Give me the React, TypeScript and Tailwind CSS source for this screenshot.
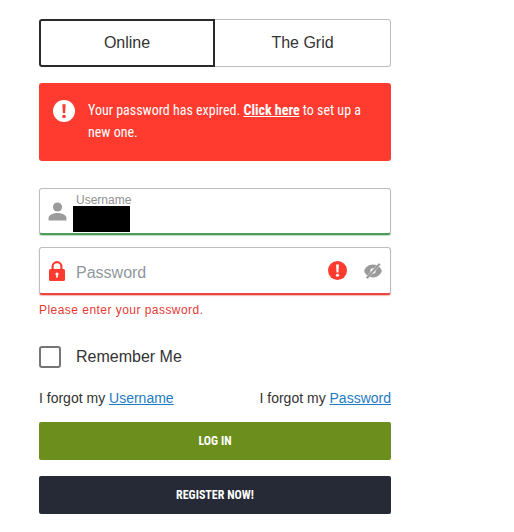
import React from 'react';

const condensed = "font-['Roboto_Condensed','Liberation_Sans_Narrow',Roboto,sans-serif] [font-stretch:75%]";

const AlertIcon: React.FC<{ className?: string; color: string; mark: string }> = ({ className, color, mark }) => (
  <svg viewBox="0 0 24 24" className={className}>
    <circle cx="12" cy="12" r="12" fill={color} />
    <path d="M10.200 4.500h3.600l-.6 10h-2.400z" fill={mark} />
    <circle cx="12" cy="18" r="2" fill={mark} />
  </svg>
);

const UserIcon = () => (
  <svg viewBox="0 0 20 20" className="w-[19px] h-[19px]" fill="#9b9b9b">
    <circle cx="10" cy="5.2" r="4.8" />
    <path d="M0.6 19.5v-2.600c0-3.600 5.600-5.300 9.400-5.300s9.400 1.700 9.400 5.300v2.600z" />
  </svg>
);

const LockIcon = () => (
  <svg viewBox="0 0 16 20" className="w-[16px] h-[20px]">
    <path d="M3.600 9V5.600a4.400 4.400 0 0 1 8.800 0V9" fill="none" stroke="#ff3b30" strokeWidth="2.200" />
    <rect x="0" y="8" width="16" height="12" rx="1.500" fill="#ff3b30" />
    <circle cx="8" cy="13" r="1.600" fill="#fff" />
    <rect x="7.200" y="13" width="1.600" height="3.600" fill="#fff" />
  </svg>
);

const EyeOffIcon = () => (
  <svg viewBox="0 0 20 18" className="w-[18px] h-[16px]" fill="#9a9a9a">
    <path fillRule="evenodd" d="M10 1.800c5 0 8.700 3.300 10 7.200-1.300 3.900-5 7.200-10 7.200S1.300 12.900 0 9c1.300-3.900 5-7.200 10-7.200zM10 6a3 3 0 1 0 0 6 3 3 0 0 0 0-6z" />
    <path d="M16.500 0l2.300 1.700L4 18l-2.300-1.700z" stroke="#fff" strokeWidth="0.4" />
  </svg>
);

export default function App() {
  return (
    <div className="w-[514px] h-[532px] bg-white font-['Liberation_Sans',Arial,sans-serif] text-[#333]">
      <div className="w-[352px] ml-[39px] pt-[19px] flex flex-col">
        <div className="flex h-[48px] text-[16px]">
          <button className="w-[176px] rounded-l-[3px] border-2 border-[#2a2a2a] flex items-center justify-center">
            Online
          </button>
          <button className="flex-1 rounded-r-[3px] border border-l-0 border-[#bdbdbd] flex items-center justify-center">
            The Grid
          </button>
        </div>

        <div className="mt-[16px] h-[78px] rounded-[3px] bg-[#ff3b30] text-white flex pl-[14px] pr-[20px] pt-[16px]">
          <AlertIcon className="w-[22px] h-[22px] shrink-0 mt-[1px]" color="#fff" mark="#ff3b30" />
          <p className={`ml-[13px] text-[14px] leading-[22px] ${condensed}`}>
            Your password has expired. <a className="font-bold underline">Click here</a> to set up a new one.
          </p>
        </div>

        <div className="mt-[27px] h-[47px] rounded-[3px] border border-[#bdbdbd] border-b-2 border-b-[#4f9d5b] shadow-[0_1px_1px_rgba(79,157,91,0.4)] flex">
          <div className="w-[33px] flex items-center justify-center pl-[1px] pt-[1px]">
            <UserIcon />
          </div>
          <div className="flex flex-col">
            <span className="pl-[3px] text-[12px] leading-[12px] pt-[5px] text-[#8f8f8f]">Username</span>
            <div className="w-[57px] h-[26px] bg-black" />
          </div>
        </div>

        <div className="mt-[12px] h-[48px] rounded-[3px] border border-[#bdbdbd] border-b-2 border-b-[#e8473f] shadow-[0_1px_1px_rgba(232,71,63,0.4)] flex items-center">
          <div className="w-[33px] flex items-center justify-center pl-[1px]">
            <LockIcon />
          </div>
          <span className="flex-1 pl-[3px] pt-[5px] text-[16px] text-[#8f979c]">Password</span>
          <AlertIcon className="w-[19px] h-[19px]" color="#ff3b30" mark="#fff" />
          <div className="ml-[17px] mr-[8px]">
            <EyeOffIcon />
          </div>
        </div>

        <p className="mt-[7px] text-[12px] leading-[16px] tracking-[0.46px] text-[#e53935]">Please enter your password.</p>

        <label className="mt-[28px] flex items-center h-[22px]">
          <span className="w-[22px] h-[22px] rounded-[3px] border-2 border-[#757575]" />
          <span className="ml-[15px] text-[16px]">Remember Me</span>
        </label>

        <div className="mt-[20px] flex justify-between text-[14px] leading-[20px]">
          <span>
            I forgot my <a className="text-[#1e7bc4] underline">Username</a>
          </span>
          <span>
            I forgot my <a className="text-[#1e7bc4] underline">Password</a>
          </span>
        </div>

        <button className={`mt-[14px] h-[38px] rounded-[2px] bg-[#6b8e1c] text-white text-[12px] font-bold ${condensed}`}>
          LOG IN
        </button>
        <button className={`mt-[16px] h-[38px] rounded-[2px] bg-[#252a36] text-white text-[12px] font-bold ${condensed}`}>
          REGISTER NOW!
        </button>
      </div>
    </div>
  );
}
